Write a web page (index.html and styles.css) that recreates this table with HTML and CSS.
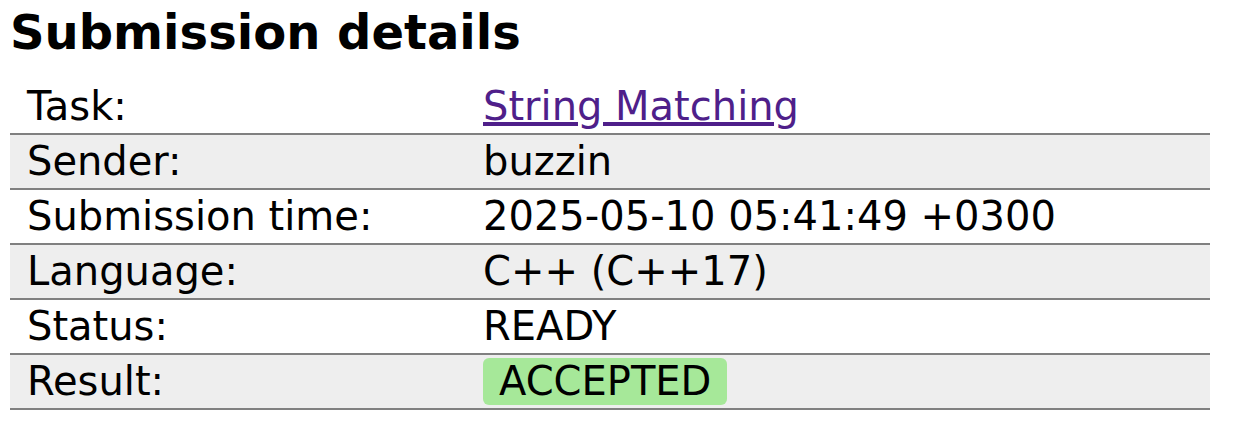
FILE: index.html
```html
<!DOCTYPE html>
<html>
<head>
<meta charset="utf-8">
<link rel="stylesheet" href="styles.css">
</head>
<body>
<h1 class="title">Submission details</h1>
<table class="details">
  <tr><td class="label">Task:</td><td><a class="task-link" href="#">String Matching</a></td></tr>
  <tr><td class="label">Sender:</td><td>buzzin</td></tr>
  <tr><td class="label">Submission time:</td><td>2025-05-10 05:41:49 +0300</td></tr>
  <tr><td class="label">Language:</td><td>C++ (C++17)</td></tr>
  <tr><td class="label">Status:</td><td>READY</td></tr>
  <tr><td class="label">Result:</td><td><span class="verdict">ACCEPTED</span></td></tr>
</table>
</body>
</html>
```

FILE: styles.css
```css
html, body {
  margin: 0;
  padding: 0;
  background: #fff;
}
body {
  padding: 0 10px;
  font-family: "DejaVu Sans", Verdana, sans-serif;
  color: #000;
}
.title {
  margin: 0;
  padding-top: 4px;
  height: 76px;
  font-size: 48px;
  font-weight: bold;
  line-height: 56px;
}
.details {
  width: 1200px;
  border-collapse: collapse;
  font-size: 40px;
}
.details tr {
  border-bottom: 2px solid #808080;
}
.details tr:nth-child(even) {
  background: #eeeeee;
}
.details td {
  height: 53px;
  padding: 0 17px;
  vertical-align: middle;
  line-height: 53px;
}
.details td.label {
  width: 439px;
}
.details td + td {
  padding-left: 0;
}
.task-link {
  color: #4f1f8a;
}
.verdict {
  display: inline-block;
  background: #a6e899;
  border-radius: 6px;
  padding: 0 16px;
  line-height: 47px;
}
```
